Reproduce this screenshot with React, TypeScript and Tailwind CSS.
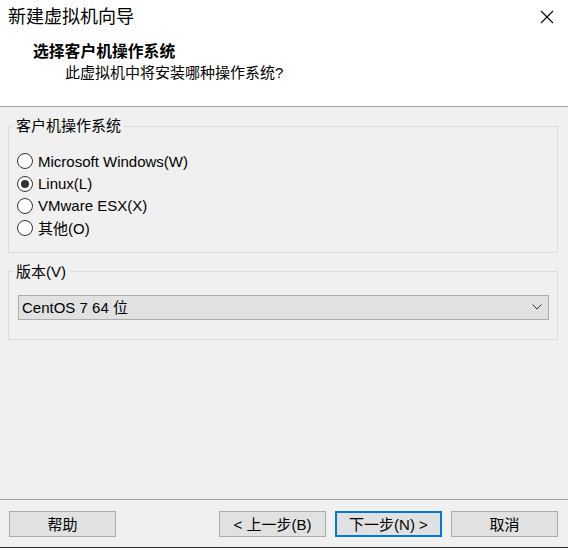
import React from "react";

const font = { fontFamily: '"Liberation Sans", "Noto Sans CJK SC", sans-serif' };

function Radio({ label, checked }: { label: string; checked?: boolean }) {
  return (
    <div className="flex h-[22.4px] items-center">
      <span className="ml-[8px] flex h-[16px] w-[16px] items-center justify-center rounded-full border border-[#333333] bg-white">
        {checked && <span className="h-[8px] w-[8px] rounded-full bg-[#333333]" />}
      </span>
      <span className="ml-[5px] text-[15px] leading-none text-black">{label}</span>
    </div>
  );
}

function Btn({ label, primary }: { label: string; primary?: boolean }) {
  return (
    <div
      className={
        "flex h-[26px] w-[107px] items-center justify-center bg-[#e1e1e1] text-[15px] leading-none text-black " +
        (primary ? "border-2 border-[#0078d7]" : "border border-[#adadad]")
      }
    >
      {label}
    </div>
  );
}

export default function App() {
  return (
    <div className="flex h-[548px] w-[568px] flex-col bg-[#f0f0f0]" style={font}>
      <div className="flex h-[107px] flex-col border-b border-[#a0a0a0] bg-white">
        <div className="flex h-[34px] items-center justify-between">
          <span className="ml-[8px] text-[18px] leading-none text-black">新建虚拟机向导</span>
          <svg width="14" height="14" viewBox="0 0 14 14" className="mr-[14px]">
            <path d="M1 1 L13 13 M13 1 L1 13" stroke="#000" strokeWidth="1.1" />
          </svg>
        </div>
        <div className="ml-[33px] mt-[10px] text-[15.8px] font-bold leading-none text-black">选择客户机操作系统</div>
        <div className="ml-[65px] mt-[5px] text-[15px] leading-none text-black">此虚拟机中将安装哪种操作系统?</div>
      </div>

      <div className="flex flex-1 flex-col pl-[8px] pr-[10px] pt-[9px]">
        <fieldset className="border border-[#dcdcdc] pb-[12px]">
          <legend className="ml-[4px] h-[20px] px-[3px] text-[15px] leading-[20px] text-black">客户机操作系统</legend>
          <div className="mt-[14px] flex flex-col">
            <Radio label="Microsoft Windows(W)" />
            <Radio label="Linux(L)" checked />
            <Radio label="VMware ESX(X)" />
            <Radio label="其他(O)" />
          </div>
        </fieldset>

        <fieldset className="mt-[9px] border border-[#dcdcdc] pb-[19px]">
          <legend className="ml-[4px] h-[20px] px-[3px] text-[15px] leading-[20px] text-black">版本(V)</legend>
          <div className="ml-[9px] mr-[8px] mt-[13px] flex h-[25px] items-center justify-between border border-[#adadad] bg-[#e1e1e1]">
            <span className="ml-[3px] text-[15px] leading-none text-black">CentOS 7 64 位</span>
            <svg width="10" height="6" viewBox="0 0 10 6" className="mr-[6px]">
              <path d="M0.5 0.5 L5 5 L9.5 0.5" fill="none" stroke="#333" strokeWidth="1" />
            </svg>
          </div>
        </fieldset>
      </div>

      <div className="flex h-[49px] items-start border-t border-[#a0a0a0] pt-[11px] pl-[9px] pr-[10px] border-b border-b-[#2b2b2b]">
        <Btn label="帮助" />
        <div className="ml-auto flex gap-[9px]">
          <Btn label="< 上一步(B)" />
          <Btn label="下一步(N) >" primary />
          <Btn label="取消" />
        </div>
      </div>
    </div>
  );
}
